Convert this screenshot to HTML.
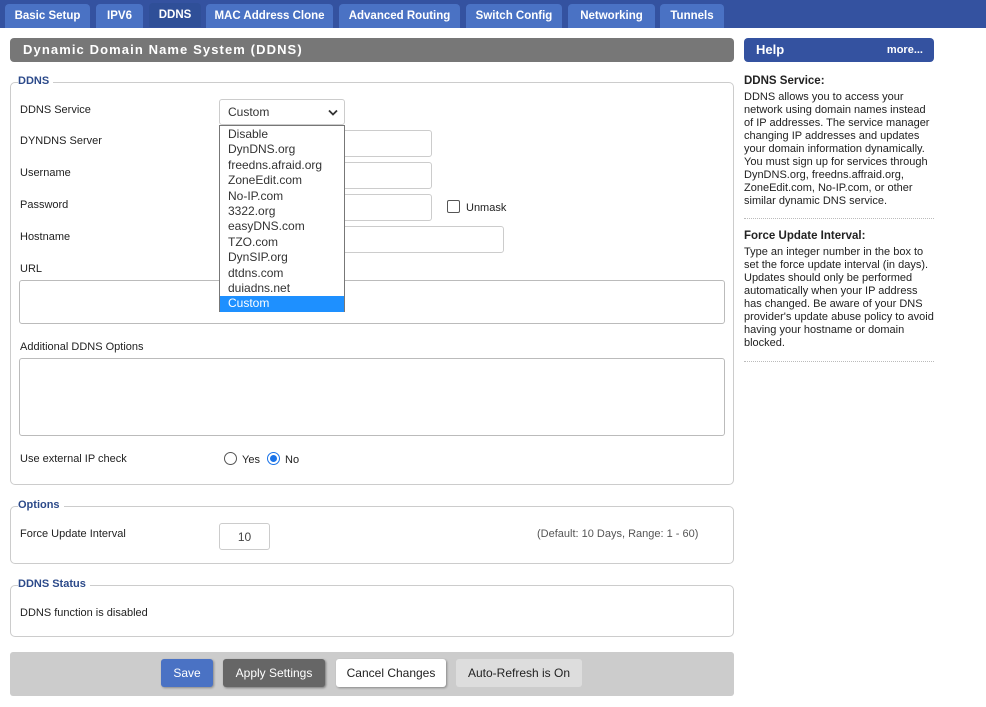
<!DOCTYPE html>
<html><head><meta charset="utf-8"><style>
*{box-sizing:border-box;margin:0;padding:0}
body{width:986px;height:707px;background:#fff;font-family:"Liberation Sans",Tahoma,sans-serif;font-size:11px;color:#222;position:relative;overflow:hidden}
.a{position:absolute}
.top{left:0;top:0;width:986px;height:28px;background:#3452a0}
.tab{position:absolute;top:4px;height:24px;background:#4a72c4;color:#fff;font-weight:bold;font-size:11.5px;text-align:center;line-height:25px;border-radius:4px 4px 0 0}
.tab.on{background:#2f4f98;top:3px;line-height:24px}
.bar{top:38px;height:24px;border-radius:4px;color:#fff;font-weight:bold;font-size:13px;line-height:24px}
fieldset{position:absolute;border:1px solid #ccc;border-radius:5px;left:10px;width:724px}
.lg{position:absolute;left:18px;color:#2c4a8a;font-weight:bold;font-size:11px;background:#fff;padding:0 0 0 0}
.lb{position:absolute;left:20px;font-size:11px}
.in{position:absolute;border:1px solid #ccc;border-radius:3px;background:#fff}
.help{position:absolute;left:744px;width:192px;font-size:11px;line-height:13px}
.dd{left:219px;top:125px;width:126px;height:187px;border:1px solid #777;background:#fff;font-size:12px;color:#333}
.dd div{height:15.4px;line-height:15.4px;padding-left:8px}
.btn{position:absolute;top:659px;height:28px;line-height:28px;text-align:center;font-size:12px;border-radius:3px}
</style></head><body>
<div class="a top"></div>
<div class="tab" style="left:5px;width:85px">Basic Setup</div>
<div class="tab" style="left:96px;width:47px">IPV6</div>
<div class="tab on" style="left:149px;width:52px">DDNS</div>
<div class="tab" style="left:206px;width:127px">MAC Address Clone</div>
<div class="tab" style="left:339px;width:121px">Advanced Routing</div>
<div class="tab" style="left:466px;width:96px">Switch Config</div>
<div class="tab" style="left:568px;width:87px">Networking</div>
<div class="tab" style="left:660px;width:64px">Tunnels</div>

<div class="a bar" style="left:10px;width:724px;background:#777;padding-left:13px;letter-spacing:1.1px">Dynamic Domain Name System (DDNS)</div>
<div class="a bar" style="left:744px;width:190px;background:#3452a0;padding-left:12px">Help<span style="position:absolute;right:11px;font-size:11px">more...</span></div>

<fieldset style="top:82px;height:403px"></fieldset>
<div class="lg" style="top:75px;padding-right:4px">DDNS</div>
<div class="lb" style="top:104px">DDNS Service</div>
<div class="lb" style="top:135px">DYNDNS Server</div>
<div class="lb" style="top:167px">Username</div>
<div class="lb" style="top:199px">Password</div>
<div class="lb" style="top:231px">Hostname</div>
<div class="lb" style="top:263px">URL</div>
<div class="lb" style="top:341px">Additional DDNS Options</div>
<div class="lb" style="top:453px">Use external IP check</div>

<div class="in" style="left:219px;top:99px;width:126px;height:26px;font-size:12px;line-height:25px;padding-left:8px;color:#333">Custom<svg style="position:absolute;right:6px;top:9px" width="10" height="7"><path d="M1 1.5 L5 5.5 L9 1.5" stroke="#333" stroke-width="1.8" fill="none"/></svg></div>
<div class="in" style="left:219px;top:130px;width:213px;height:27px"></div>
<div class="in" style="left:219px;top:162px;width:213px;height:27px"></div>
<div class="in" style="left:219px;top:194px;width:213px;height:27px"></div>
<div class="in" style="left:219px;top:226px;width:285px;height:27px"></div>
<div class="in" style="left:447px;top:200px;width:13px;height:13px;border:1px solid #555;border-radius:2px"></div>
<div class="a" style="left:466px;top:202px;font-size:11px">Unmask</div>
<div class="in" style="left:19px;top:280px;width:706px;height:44px;border-color:#bbb"></div>
<div class="in" style="left:19px;top:358px;width:706px;height:78px;border-color:#bbb"></div>

<div class="a dd">
<div style="margin-top:1px">Disable</div><div>DynDNS.org</div><div>freedns.afraid.org</div><div>ZoneEdit.com</div><div>No-IP.com</div><div>3322.org</div><div>easyDNS.com</div><div>TZO.com</div><div>DynSIP.org</div><div>dtdns.com</div><div>duiadns.net</div><div style="background:#1e90ff;color:#fff">Custom</div>
</div>

<div class="a" style="left:224px;top:452px;width:13px;height:13px;border:1px solid #555;border-radius:50%"></div>
<div class="a" style="left:242px;top:454px">Yes</div>
<div class="a" style="left:267px;top:452px;width:13px;height:13px;border:1px solid #1a73e8;border-radius:50%;padding:2px"><div style="width:7px;height:7px;background:#1a73e8;border-radius:50%"></div></div>
<div class="a" style="left:285px;top:454px">No</div>

<fieldset style="top:506px;height:58px"></fieldset>
<div class="lg" style="top:499px;padding-right:4px">Options</div>
<div class="lb" style="top:528px">Force Update Interval</div>
<div class="in" style="left:219px;top:523px;width:51px;height:27px;text-align:center;line-height:27px;font-size:12px;color:#444">10</div>
<div class="a" style="left:537px;top:528px;color:#555">(Default: 10 Days, Range: 1 - 60)</div>

<fieldset style="top:585px;height:52px"></fieldset>
<div class="lg" style="top:578px;padding-right:4px">DDNS Status</div>
<div class="lb" style="top:607px">DDNS function is disabled</div>

<div class="a" style="left:10px;top:652px;width:724px;height:44px;background:#ccc;border-radius:3px"></div>
<div class="btn" style="left:161px;width:52px;background:#4a72c4;color:#fff;box-shadow:1px 1px 2px #888">Save</div>
<div class="btn" style="left:223px;width:102px;background:#666;color:#fff;box-shadow:1px 1px 2px #777">Apply Settings</div>
<div class="btn" style="left:336px;width:110px;background:#fff;color:#222;box-shadow:1px 1px 2px #888">Cancel Changes</div>
<div class="btn" style="left:456px;width:126px;background:#ddd;color:#222">Auto-Refresh is On</div>

<div class="help" style="top:75px"><b style="font-size:11.5px">DDNS Service:</b><div style="margin-top:3px">DDNS allows you to access your network using domain names instead of IP addresses. The service manager changing IP addresses and updates your domain information dynamically. You must sign up for services through DynDNS.org, freedns.affraid.org, ZoneEdit.com, No-IP.com, or other similar dynamic DNS service.</div></div>
<div class="a" style="left:744px;top:218px;width:190px;border-top:1px dotted #bbb"></div>
<div class="help" style="top:230px"><b style="font-size:11.5px">Force Update Interval:</b><div style="margin-top:3px">Type an integer number in the box to set the force update interval (in days). Updates should only be performed automatically when your IP address has changed. Be aware of your DNS provider's update abuse policy to avoid having your hostname or domain blocked.</div></div>
<div class="a" style="left:744px;top:361px;width:190px;border-top:1px dotted #bbb"></div>
</body></html>
